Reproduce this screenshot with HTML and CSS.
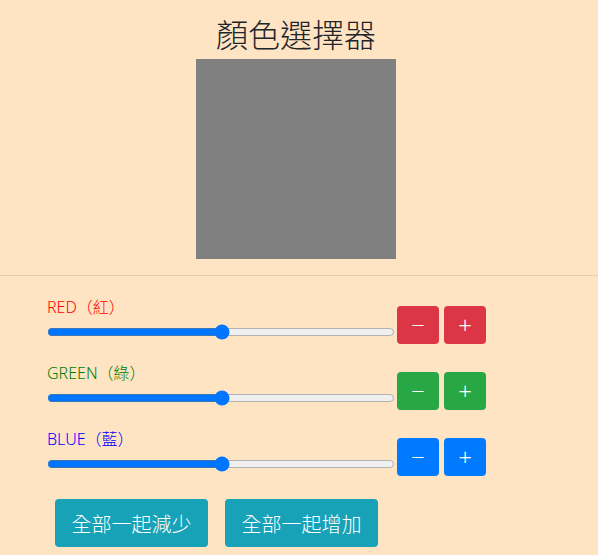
FILE: index.html
```html
<!DOCTYPE html>
<html>
<head>
    <title>顏色選擇器</title>
    <meta charset="utf-8" />
    <meta name="viewport" content="width=device-width, initial-scale=1.0">
    <link rel="stylesheet" href="styles.css">
</head>
<body>
    <h1 class="title">顏色選擇器</h1>
    <div class="preview" id="preview"></div>
    <hr class="divider">

    <div class="controls">
        <div class="color-row">
            <div class="slider-col">
                <label class="color-label red" for="redRange">RED（紅）</label>
                <input type="range" class="color-range" id="redRange" min="0" max="255" value="128">
            </div>
            <div class="step-buttons">
                <button class="btn btn-red" data-c="red" data-d="-1">−</button>
                <button class="btn btn-red" data-c="red" data-d="1">+</button>
            </div>
        </div>
        <div class="color-row">
            <div class="slider-col">
                <label class="color-label green" for="greenRange">GREEN（綠）</label>
                <input type="range" class="color-range" id="greenRange" min="0" max="255" value="128">
            </div>
            <div class="step-buttons">
                <button class="btn btn-green" data-c="green" data-d="-1">−</button>
                <button class="btn btn-green" data-c="green" data-d="1">+</button>
            </div>
        </div>
        <div class="color-row">
            <div class="slider-col">
                <label class="color-label blue" for="blueRange">BLUE（藍）</label>
                <input type="range" class="color-range" id="blueRange" min="0" max="255" value="128">
            </div>
            <div class="step-buttons">
                <button class="btn btn-blue" data-c="blue" data-d="-1">−</button>
                <button class="btn btn-blue" data-c="blue" data-d="1">+</button>
            </div>
        </div>

        <div class="all-row">
            <button class="btn-all" id="allDown">全部一起減少</button>
            <button class="btn-all" id="allUp">全部一起增加</button>
        </div>
    </div>

    <script>
        const names = ["red", "green", "blue"];
        const preview = document.getElementById("preview");

        function update() {
            const [r, g, b] = names.map(n => document.getElementById(n + "Range").value);
            preview.style.backgroundColor = `rgb(${r}, ${g}, ${b})`;
        }

        function step(name, d) {
            const input = document.getElementById(name + "Range");
            input.value = Math.min(255, Math.max(0, Number(input.value) + d));
            update();
        }

        names.forEach(n => document.getElementById(n + "Range").addEventListener("input", update));

        document.querySelectorAll(".btn").forEach(btn => {
            btn.addEventListener("click", () => step(btn.dataset.c, Number(btn.dataset.d)));
        });

        document.getElementById("allDown").addEventListener("click", () => names.forEach(n => step(n, -1)));
        document.getElementById("allUp").addEventListener("click", () => names.forEach(n => step(n, 1)));

        update();
    </script>
</body>
</html>
```

FILE: styles.css
```css
body {
    margin: 0;
    background-color: bisque;
    font-family: "Noto Sans", "Noto Sans CJK TC", sans-serif;
    color: #212529;
}

.title {
    margin: 16px 0 5px;
    padding-right: 6px;
    font-size: 32px;
    font-weight: 300;
    line-height: 38px;
    text-align: center;
}

.preview {
    width: 200px;
    height: 200px;
    margin-left: 196px;
    background-color: rgb(128, 128, 128);
}

.divider {
    margin: 16px 0 0;
    border: 0;
    border-top: 1px solid rgba(0, 0, 0, 0.1);
}

.controls {
    padding: 21px 0 0 47px;
}

.color-row {
    display: flex;
    align-items: flex-start;
    margin-bottom: 19px;
}

.slider-col {
    display: flex;
    flex-direction: column;
}

.color-label {
    font-size: 16px;
    font-weight: 300;
    line-height: 20px;
}

.red { color: red; }
.green { color: green; }
.blue { color: blue; }

.color-range {
    display: block;
    width: 348px;
    height: 16px;
    margin: 7px 0 0;
}

.step-buttons {
    display: flex;
    gap: 5px;
    margin: 9px 0 0 2px;
}

.btn {
    width: 42px;
    height: 38px;
    padding: 0;
    border: none;
    border-radius: 4px;
    color: white;
    font-size: 24px;
    font-weight: 300;
    line-height: 38px;
    font-family: inherit;
    cursor: pointer;
}

.btn-red { background-color: #dc3545; }
.btn-green { background-color: #28a745; }
.btn-blue { background-color: #007bff; }

.all-row {
    display: flex;
    gap: 17px;
    margin: 23px 0 0 8px;
}

.btn-all {
    width: 153px;
    height: 48px;
    border: none;
    border-radius: 4px;
    background-color: #17a2b8;
    color: white;
    font-size: 20px;
    font-weight: 300;
    font-family: inherit;
    cursor: pointer;
}
```
